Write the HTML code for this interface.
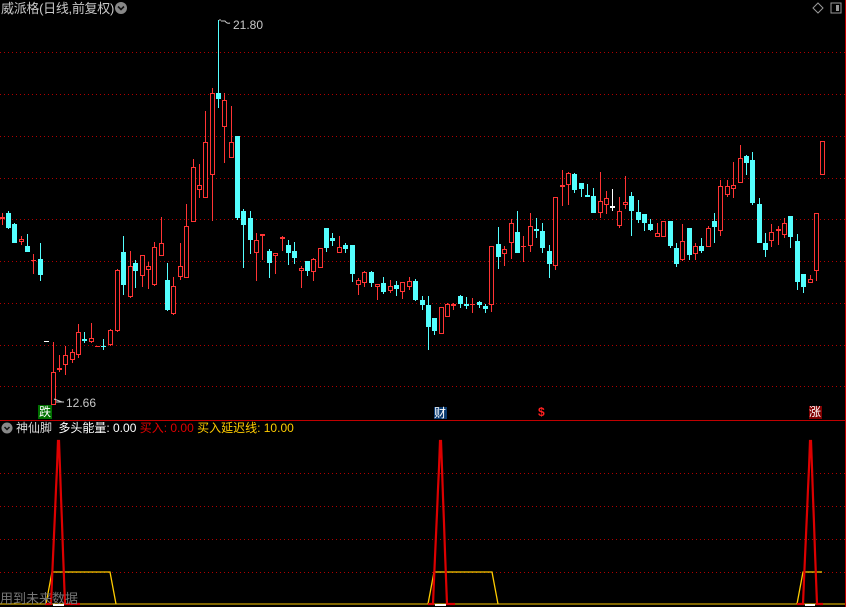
<!DOCTYPE html>
<html><head><meta charset="utf-8"><style>
html,body{margin:0;padding:0;background:#000;width:846px;height:607px;overflow:hidden}
body{position:relative;font-family:"Liberation Sans","Noto Sans CJK SC",sans-serif}
.t{position:absolute;white-space:nowrap;line-height:1}
</style></head><body>
<svg id="s" width="846" height="607" style="position:absolute;left:0;top:0" xmlns="http://www.w3.org/2000/svg">
<g stroke="#b00000" stroke-width="1" stroke-dasharray="1,3">
<line x1="0" y1="52.5" x2="845" y2="52.5"/><line x1="0" y1="94.5" x2="845" y2="94.5"/><line x1="0" y1="136.5" x2="845" y2="136.5"/><line x1="0" y1="178.5" x2="845" y2="178.5"/><line x1="0" y1="219.5" x2="845" y2="219.5"/><line x1="0" y1="261.5" x2="845" y2="261.5"/><line x1="0" y1="303.5" x2="845" y2="303.5"/><line x1="0" y1="345.5" x2="845" y2="345.5"/><line x1="0" y1="386.5" x2="845" y2="386.5"/>
<line x1="0" y1="473.5" x2="845" y2="473.5"/><line x1="0" y1="506.5" x2="845" y2="506.5"/><line x1="0" y1="539.5" x2="845" y2="539.5"/><line x1="0" y1="572.5" x2="845" y2="572.5"/>
</g>
<line x1="0" y1="420.5" x2="846" y2="420.5" stroke="#c00000"/>
<line x1="845.5" y1="0" x2="845.5" y2="607" stroke="#c00000"/>
<g id="c"></g>
<polyline points="219,20 221,20" stroke="#ccc" fill="none"/>
<path d="M221,21 L225,21 Q227,24 230,23" stroke="#ccc" fill="none"/>
<path d="M54,399 L62,402 M56,402 L64,402" stroke="#ccc" fill="none"/>
<line x1="0" y1="604" x2="845" y2="604" stroke="#ffcc00" stroke-width="1"/>
<g fill="none" stroke="#ffcc00" stroke-width="1.3">
<polyline points="46,604 52,572 110,572 116,604"/>
<polyline points="428,604 434,572 492,572 498,604"/>
<polyline points="797,604 803,572 822,572"/>
</g>
<g fill="none" stroke="#dd0000" stroke-width="2.2">
<polyline points="45,604 51,604 52,580 53,557 54,535 55,513 56,489 57,468 58,441 59,441 60,468 61,497 62,523 63,552 64,578 65,604 80,604"/>
<polyline points="428,604 433,604 434,580 435,557 436,535 437,513 438,489 439,468 440,441 441,441 442,468 443,497 444,523 445,552 446,578 447,604 455,604"/>
<polyline points="797,604 803,604 804,580 805,557 806,535 807,513 808,489 809,468 810,441 811,441 812,468 813,497 814,523 815,552 816,578 817,604 823,604"/>
</g>
<g stroke="#fff" stroke-width="2"><line x1="53" y1="605" x2="64" y2="605"/><line x1="435" y1="605" x2="446" y2="605"/><line x1="805" y1="605" x2="815" y2="605"/></g>
<circle cx="121" cy="8" r="6" fill="#888"/><path d="M118,6.5 L121,9.5 L124,6.5" stroke="#111" stroke-width="1.6" fill="none"/>
<circle cx="7" cy="428" r="5.5" fill="#888"/><path d="M4.5,427 L7,429.5 L9.5,427" stroke="#111" stroke-width="1.5" fill="none"/>
<path d="M818,3 L823,8 L818,13 L813,8 Z" stroke="#999" fill="none"/>
<rect x="831" y="3" width="10" height="10" stroke="#999" fill="none"/><rect x="836" y="5" width="3" height="6" fill="#999"/>
<rect x="38" y="405" width="14" height="14" fill="#007000"/>
<rect x="434" y="407" width="13" height="12" fill="#0a3a70"/>
<rect x="809" y="406" width="13" height="13" fill="#800000"/>
</svg>
<div class="t" style="left:1px;top:2px;font-size:13px;letter-spacing:-0.3px;color:#c8c8c8">威派格(日线,前复权)</div>
<div class="t" style="left:233px;top:19px;font-size:12px;color:#c8c8c8">21.80</div>
<div class="t" style="left:66px;top:397px;font-size:12px;color:#c8c8c8">12.66</div>
<div class="t" style="left:39px;top:406px;font-size:12px;color:#fff">跌</div>
<div class="t" style="left:434px;top:407px;font-size:12px;color:#fff">财</div>
<div class="t" style="left:538px;top:406px;font-size:12px;color:#ff2020;font-weight:bold">$</div>
<div class="t" style="left:809px;top:406px;font-size:12px;color:#fff">涨</div>
<div class="t" style="left:16px;top:422px;font-size:12px;color:#ddd">神仙脚 <span style="margin-left:3px;color:#fff">多头能量: 0.00</span> <span style="color:#e00000">买入: 0.00</span> <span style="color:#ffcc00">买入延迟线: 10.00</span></div>
<div class="t" style="left:0px;top:592px;font-size:13px;color:#777">用到未来数据</div>
<script>
var d=[
[2,'r',217,219,213,225],[8,'c',213,228,211,229],[14,'c',224,243,223,243],[21,'r',239,242,236,245],[27,'c',246,252,234,252],[33,'r',260,261,254,274],[40,'c',259,275,243,281],
[46,'w',341,342,341,342],[53,'r',372,405,342,405],[59,'r',368,370,355,372],[65,'r',355,365,346,375],[72,'r',352,360,349,363],[78,'r',332,355,324,358],[84,'c',339,341,332,343],[91,'r',338,342,323,343],[97,'r',346,347,346,347],[103,'c',346,347,339,350],
[110,'r',330,345,329,346],[117,'r',270,331,269,332],[123,'c',252,285,236,295],[130,'r',266,297,251,298],[135,'c',263,271,260,288],[142,'r',255,276,255,287],[148,'r',266,270,262,289],[154,'r',247,285,242,286],[161,'r',243,256,217,256],[167,'c',280,310,263,311],[173,'r',286,314,277,315],[180,'r',266,277,243,280],[186,'r',226,278,204,278],[193,'r',167,222,159,222],[199,'r',185,190,164,198],[205,'r',142,198,111,198],[212,'r',93,175,88,221],[218,'c',93,99,20,108],[224,'r',100,127,93,163],[231,'r',142,158,106,158],[237,'c',136,218,136,220],[243,'c',211,225,209,268],[250,'c',218,240,211,254],[256,'r',240,253,233,281],[262,'r',234,236,234,260],[269,'c',251,263,249,278],[275,'r',253,256,253,274],
[282,'r',237,239,236,251],[288,'c',245,253,240,265],[294,'c',251,258,242,264],[301,'r',268,271,266,288],[307,'c',261,271,261,276],[313,'r',259,272,258,281],[320,'r',248,268,248,268],[326,'c',228,248,228,252],[332,'c',238,241,233,246],[339,'r',247,253,236,253],[345,'c',245,249,243,253],[352,'c',245,274,245,282],[358,'r',280,285,278,295],[364,'r',272,283,271,287],[371,'c',272,283,271,287],[377,'r',284,287,284,300],[383,'c',283,292,277,294],[390,'r',286,291,280,293],[396,'c',285,289,281,296],[402,'r',282,292,282,299],[409,'r',281,287,277,290],[415,'c',281,300,279,301],[422,'c',300,305,296,310],[428,'c',305,327,296,350],[434,'c',318,331,318,335],[441,'r',307,334,307,334],[447,'r',304,317,303,317],[453,'r',304,306,303,310],[460,'c',296,304,295,308],[466,'c',304,306,297,309],[472,'r',304,305,298,313],[479,'c',302,305,301,308],[485,'c',306,309,304,313],[491,'r',246,305,246,312],[498,'c',244,257,227,269],[504,'r',249,254,246,266],[511,'r',223,243,219,259],[517,'c',232,253,211,253],[523,'r',246,247,236,262],[530,'r',226,246,213,252],[536,'c',229,231,218,238],[542,'c',231,248,223,253],[549,'c',251,264,245,278],[555,'r',197,266,197,270],
[562,'r',185,187,170,206],[568,'r',173,185,172,205],[574,'c',174,190,173,193],[581,'c',183,189,183,197],[587,'c',195,197,184,197],[593,'c',196,213,188,213],[600,'r',201,213,172,218],[606,'r',198,205,191,214],[612,'w',206,208,189,211],[619,'r',211,226,197,228],[625,'r',202,205,176,209],[631,'c',196,211,192,236],[638,'c',212,220,200,223],[644,'c',214,223,214,231],[650,'c',224,230,219,231],[657,'r',233,237,223,237],[663,'r',221,237,221,237],[670,'c',221,246,221,248],[676,'c',248,264,243,267],[682,'r',241,260,224,261],[689,'c',228,255,228,260],[695,'r',246,254,243,260],[701,'c',246,251,238,253],[708,'r',228,247,226,247],[714,'c',221,227,213,243],[720,'r',186,231,180,236],[727,'r',186,195,180,197],[733,'r',185,189,162,198],[740,'r',158,183,145,183],[746,'c',156,163,155,175],[752,'c',160,203,152,205],[759,'c',204,243,198,243],[765,'c',243,250,233,257],[771,'r',232,241,224,247],[778,'r',229,231,226,245],[784,'r',223,235,218,238],[790,'c',216,237,216,248],[797,'c',241,282,234,290],[803,'c',274,287,274,293],[810,'r',279,283,275,283],[816,'r',213,271,213,281],[822,'r',141,175,141,175]];
var h='';
d.forEach(function(c){var x=c[0],t=c[1],a=c[2],b=c[3],hi=c[4],lo=c[5];
var col=t=='r'?'#ff3434':(t=='c'?'#54ffff':'#ffffff');
h+='<line x1="'+(x+.5)+'" y1="'+hi+'" x2="'+(x+.5)+'" y2="'+lo+'" stroke="'+col+'"/>';
if(b-a<=2){h+='<rect x="'+(x-2)+'" y="'+a+'" width="5" height="'+Math.max(1,b-a)+'" fill="'+col+'"/>';}
else if(t=='r'){h+='<rect x="'+(x-1.5)+'" y="'+(a+.5)+'" width="4" height="'+(b-a-1)+'" fill="#000" stroke="'+col+'"/>';}
else{h+='<rect x="'+(x-2)+'" y="'+a+'" width="5" height="'+(b-a)+'" fill="'+col+'"/>';}
});
document.getElementById('c').innerHTML=h;
</script>
</body></html>
